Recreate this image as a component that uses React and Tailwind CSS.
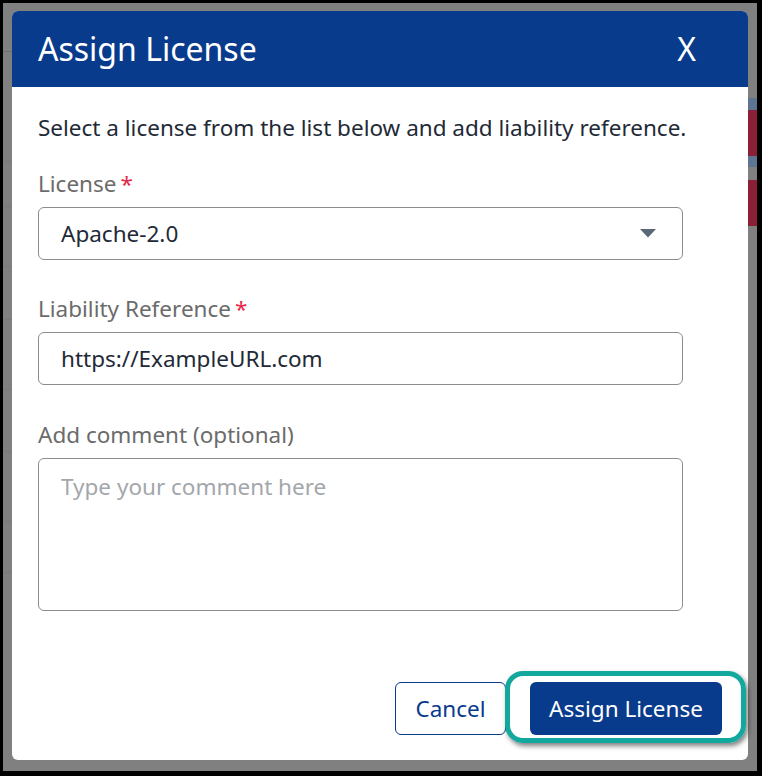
const font = { fontFamily: '"Noto Sans", "Open Sans", sans-serif' };

const Label = ({ children, required }) => (
  <div className="text-[22.5px] leading-[28px] text-[#6b6b6b] mb-[9px]">
    {children}
    {required && <span className="text-[#e8284a] ml-[4px]">*</span>}
  </div>
);

const Backdrop = () => (
  <div className="absolute inset-0 flex">
    <div className="flex-1 flex flex-col">
      <div className="h-[49px] border-b border-[#6f6f6f]" />
      <div className="h-[110px] border-b border-[#7a7a7a]" />
      <div className="h-[45px] border-b border-[#7a7a7a]" />
      <div className="h-[60px] border-b border-[#7a7a7a]" />
      <div className="h-[53px] border-b border-[#7a7a7a]" />
      <div className="h-[70px] border-b border-[#7a7a7a]" />
      <div className="h-[62px] border-b border-[#7a7a7a]" />
      <div className="h-[70px] border-b border-[#7a7a7a]" />
      <div className="h-[51px] border-b border-[#7a7a7a]" />
    </div>
    <div className="w-[9px] flex flex-col pt-[95px]">
      <div className="h-[12px] bg-[#5d7593]" />
      <div className="h-[46px] bg-[#8a1f35]" />
      <div className="h-[11px] bg-[#5d7593]" />
      <div className="h-[13px]" />
      <div className="h-[46px] bg-[#8a1f35]" />
    </div>
  </div>
);

export default function App() {
  return (
    <div className="w-[762px] h-[776px] bg-black pt-[3px] pl-[3px] pr-[5px] pb-[5px]" style={font}>
      <div className="relative w-full h-full bg-[#808080] overflow-hidden">
        <Backdrop />
        <div className="absolute left-[9px] top-[8px] w-[736px] h-[749px] bg-white rounded-[6px] flex flex-col">
          <div className="h-[76px] shrink-0 bg-[#083b8c] rounded-t-[6px] flex items-center justify-between pl-[26px] pr-[52px]">
            <h1 className="text-[32px] leading-[40px] text-white">Assign License</h1>
            <span className="text-[32px] leading-[36px] text-white">X</span>
          </div>

          <div className="px-[26px] pt-[27px] flex flex-col">
            <p className="w-[680px] text-[22.5px] leading-[28px] text-[#1f2a37] mb-[28px]">
              Select a license from the list below and add liability reference.
            </p>

            <Label required>License</Label>
            <div className="w-[645px] h-[53px] border border-[#8c8c8c] rounded-[6px] flex items-center justify-between pl-[22px] pr-[26px]">
              <span className="text-[22.5px] text-[#1f2a37]">Apache-2.0</span>
              <svg width="16" height="9" viewBox="0 0 16 9">
                <path d="M0 0 H16 L8 8.5 Z" fill="#5b6877" />
              </svg>
            </div>

            <div className="h-[35px]" />
            <Label required>Liability Reference</Label>
            <div className="w-[645px] h-[53px] border border-[#8c8c8c] rounded-[6px] flex items-center pl-[22px]">
              <span className="text-[22.5px] text-[#1f2a37]">https://ExampleURL.com</span>
            </div>

            <div className="h-[36px]" />
            <Label>Add comment (optional)</Label>
            <div className="w-[645px] h-[153px] border border-[#8c8c8c] rounded-[6px] pl-[22px] pt-[14px]">
              <span className="text-[22.5px] leading-[28px] text-[#a3a7ab]">Type your comment here</span>
            </div>
          </div>

          <div className="flex justify-end gap-[24px] px-[26px] mt-[71px]">
            <button className="w-[111px] h-[53px] border border-[#083b8c] rounded-[6px] text-[22.5px] text-[#083b8c] bg-white">
              Cancel
            </button>
            <div className="relative">
              <button className="w-[192px] h-[53px] bg-[#083b8c] rounded-[6px] text-[22.5px] text-white">
                Assign License
              </button>
              <div className="absolute -left-[25px] -right-[24px] -top-[11px] -bottom-[8px] border-[5px] border-[#12a89e] rounded-[18px] shadow-[2px_3px_5px_rgba(0,0,0,0.5)]" />
            </div>
          </div>
        </div>
      </div>
    </div>
  );
}
